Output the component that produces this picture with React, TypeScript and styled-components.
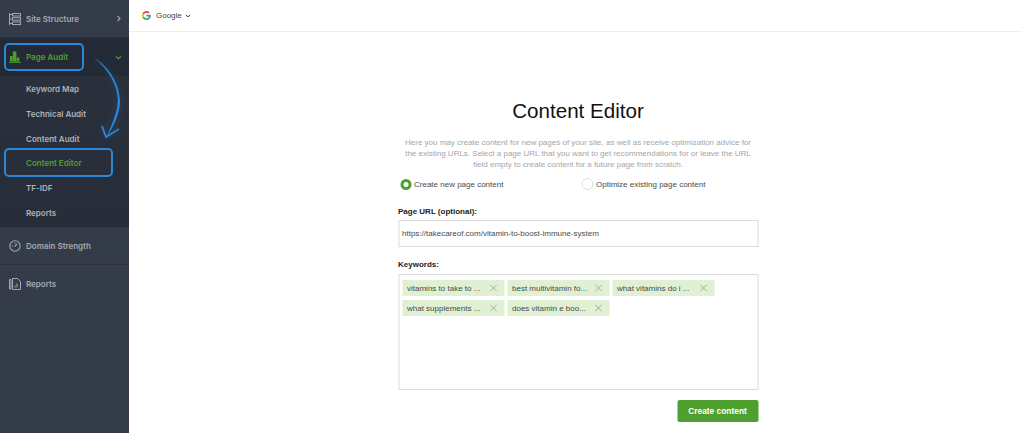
import React from "react";
import styled, { createGlobalStyle } from "styled-components";

const Global = createGlobalStyle`
  html, body { margin: 0; padding: 0; height: 100%; background: #fff; }
  body { font-family: "Liberation Sans", Arial, sans-serif; overflow: hidden; }
  #root { height: 100%; }
`;

const Page = styled.div`
  position: relative;
  display: flex;
  width: 1022px;
  height: 433px;
  overflow: hidden;
`;

const Sidebar = styled.aside`
  width: 129px;
  flex-shrink: 0;
  background: #353c49;
  font-family: Inter, "Liberation Sans", sans-serif;
`;

const NavRow = styled.div<{ $active?: boolean; $line?: boolean }>`
  display: flex;
  align-items: center;
  height: 38px;
  padding-left: 9px;
  background: ${(p) => (p.$active ? "#232a36" : "transparent")};
  border-bottom: ${(p) => (p.$line ? "1px solid #2c323e" : "none")};
  box-sizing: border-box;
  color: ${(p) => (p.$active ? "#4f9f2f" : "#a3a8b2")};
  font-size: 8px;
  font-weight: 600;
`;

const NavIcon = styled.svg`
  width: 12px;
  height: 12px;
  margin-right: 5px;
  flex-shrink: 0;
`;

const Caret = styled.svg`
  width: 7px;
  height: 7px;
  margin-left: auto;
  margin-right: 7px;
`;

const SubMenu = styled.div`
  display: flex;
  flex-direction: column;
  height: 151px;
  padding-top: 1px;
  box-sizing: border-box;
  background: linear-gradient(#2a303c, #272d38);
`;

const SubItem = styled.div<{ $active?: boolean }>`
  height: 24.8px;
  line-height: 24.8px;
  padding-left: 26px;
  font-size: 8px;
  font-weight: 600;
  color: ${(p) => (p.$active ? "#4f9f2f" : "#aeb2ba")};
`;

const Main = styled.main`
  flex: 1;
  min-width: 0;
  display: flex;
  flex-direction: column;
`;

const TopBar = styled.header`
  display: flex;
  align-items: center;
  flex-shrink: 0;
  height: 32px;
  padding-left: 13px;
  box-sizing: border-box;
  border-bottom: 1px solid #eeeeee;
  font-size: 8px;
  color: #444;
`;

const GoogleMark = styled.svg`
  width: 9px;
  height: 9px;
  margin-right: 5px;
`;

const TopCaret = styled.svg`
  width: 6px;
  height: 6px;
  margin-left: 3px;
`;

const Content = styled.div`
  width: 360px;
  margin: 0 auto;
  transform: translateX(2.5px);
  display: flex;
  flex-direction: column;
`;

const Title = styled.h1`
  margin: 66px 0 0;
  font-size: 20.6px;
  line-height: 26px;
  font-weight: 400;
  color: #111;
  text-align: center;
`;

const Intro = styled.p`
  margin: 13px 0 0;
  font-size: 8px;
  line-height: 11px;
  color: #a5a5a5;
  text-align: center;
  white-space: nowrap;
`;

const RadioRow = styled.div`
  display: grid;
  grid-template-columns: 181px 1fr;
  margin-top: 7px;
  padding-left: 2px;
  font-size: 8px;
  color: #4a4a4a;
`;

const RadioOption = styled.label`
  display: flex;
  align-items: center;
  gap: 3px;
  height: 14px;
`;

const RadioDot = styled.span<{ $on?: boolean }>`
  width: ${(p) => (p.$on ? "5px" : "10px")};
  height: ${(p) => (p.$on ? "5px" : "10px")};
  border-radius: 50%;
  background: #fff;
  border: ${(p) => (p.$on ? "3.5px solid #4f9f2f" : "1px solid #ddd")};
  flex-shrink: 0;
`;

const FieldLabel = styled.div<{ $top: number }>`
  margin-top: ${(p) => p.$top}px;
  font-size: 8px;
  line-height: 12px;
  font-weight: 700;
  color: #222;
`;

const UrlField = styled.div`
  margin-top: 2px;
  height: 27px;
  box-sizing: border-box;
  border: 1px solid #dcdcdc;
  padding-left: 3px;
  display: flex;
  align-items: center;
  font-size: 8px;
  color: #4a4a4a;
`;

const KeywordBox = styled.div`
  margin-top: 3px;
  height: 116px;
  box-sizing: border-box;
  border: 1px solid #dcdcdc;
  padding: 5px 3px;
  display: flex;
  flex-wrap: wrap;
  align-content: flex-start;
  gap: 4px 3px;
`;

const Tag = styled.div`
  width: 102px;
  height: 16px;
  box-sizing: border-box;
  background: #dff0d3;
  padding: 0 7px 0 5px;
  display: flex;
  align-items: center;
  justify-content: space-between;
  font-size: 8px;
  color: #4a4a4a;
  white-space: nowrap;
`;

const TagClose = styled.svg`
  width: 8px;
  height: 8px;
`;

const Actions = styled.div`
  display: flex;
  justify-content: flex-end;
  margin-top: 10px;
`;

const CreateButton = styled.button`
  width: 81px;
  height: 22px;
  border: none;
  border-radius: 2px;
  background: #4f9f2f;
  color: #fff;
  font-family: inherit;
  font-size: 8.4px;
  font-weight: 700;
  padding: 0;
`;

const Callout = styled.div<{ $x: number; $y: number; $w: number; $h: number }>`
  position: absolute;
  left: ${(p) => p.$x}px;
  top: ${(p) => p.$y}px;
  width: ${(p) => p.$w}px;
  height: ${(p) => p.$h}px;
  box-sizing: border-box;
  border: 2px solid #2b88d8;
  border-radius: 5px;
`;

const ArrowArt = styled.svg`
  position: absolute;
  left: 90px;
  top: 52px;
  width: 40px;
  height: 96px;
  overflow: visible;
  filter: drop-shadow(0 0 3px rgba(43, 136, 216, 0.35));
`;

const keywords = [
  "vitamins to take to ...",
  "best multivitamin fo...",
  "what vitamins do i ...",
  "what supplements ...",
  "does vitamin e boo...",
];

const iconStroke = "#a3a8b2";

export default function App() {
  return (
    <Page>
      <Global />
      <Sidebar>
        <NavRow $line>
          <NavIcon viewBox="0 0 12 12" fill="none" stroke={iconStroke} strokeWidth="1">
            <path d="M.5 0v12M.5 1.500h2.500M.5 6h2.500M.5 10.500h2.500" />
            <rect x="3.500" y=".5" width="8" height="2.500" />
            <rect x="3.500" y="4.700" width="8" height="2.500" />
            <rect x="3.500" y="9" width="8" height="2.500" />
          </NavIcon>
          Site Structure
          <Caret viewBox="0 0 7 7" fill="none" stroke={iconStroke} strokeWidth="1.1">
            <path d="M2.500 1l2.500 2.500-2.500 2.500" />
          </Caret>
        </NavRow>
        <NavRow $active>
          <NavIcon viewBox="0 0 12 12" fill="#4f9f2f">
            <rect x="1" y="5" width="2.500" height="5.500" />
            <rect x="3.800" y="0.500" width="3.600" height="10" />
            <rect x="7.700" y="6.500" width="2.500" height="4" />
            <rect x="0" y="10.800" width="12" height="1" />
          </NavIcon>
          Page Audit
          <Caret viewBox="0 0 7 7" fill="none" stroke="#4f9f2f" strokeWidth="1.2">
            <path d="M1 2.500l2.500 2.200 2.500-2.200" />
          </Caret>
        </NavRow>
        <SubMenu>
          <SubItem>Keyword Map</SubItem>
          <SubItem>Technical Audit</SubItem>
          <SubItem>Content Audit</SubItem>
          <SubItem $active>Content Editor</SubItem>
          <SubItem>TF-IDF</SubItem>
          <SubItem>Reports</SubItem>
        </SubMenu>
        <NavRow $line>
          <NavIcon viewBox="0 0 12 12" fill="none" stroke={iconStroke} strokeWidth="1.1">
            <circle cx="6" cy="6" r="5.200" />
            <path d="M5.600 6.600l2.600-2.800M2.800 6h1.200M6 2.800v1" />
          </NavIcon>
          Domain Strength
        </NavRow>
        <NavRow>
          <NavIcon viewBox="0 0 12 12" fill="none" stroke={iconStroke} strokeWidth="1">
            <path d="M.5 1.500h1.500v9.500H.5zM3.500.5h5l3 3v8h-8z" />
            <path d="M6 9.500V7.500M8 9.500V5.500" />
          </NavIcon>
          Reports
        </NavRow>
      </Sidebar>

      <Main>
        <TopBar>
          <GoogleMark viewBox="0 0 48 48">
            <path fill="#EA4335" d="M24 9.500c3.500 0 6.700 1.200 9.200 3.600l6.900-6.900C35.900 2.400 30.400 0 24 0 14.600 0 6.500 5.400 2.600 13.200l8 6.200C12.500 13.600 17.800 9.500 24 9.500z" />
            <path fill="#4285F4" d="M46.900 24.500c0-1.600-.1-3.100-.4-4.500H24v9h12.900c-.6 3-2.200 5.500-4.700 7.200l7.700 6c4.500-4.200 7-10.300 7-17.700z" />
            <path fill="#FBBC05" d="M10.500 28.600c-.5-1.400-.8-3-.8-4.600s.3-3.200.8-4.600l-8-6.200C.9 16.500 0 20.100 0 24s.9 7.500 2.600 10.800l7.900-6.200z" />
            <path fill="#34A853" d="M24 48c6.500 0 11.900-2.100 15.900-5.800l-7.700-6c-2.200 1.500-4.900 2.300-8.200 2.300-6.200 0-11.500-4.200-13.400-9.800l-8 6.200C6.500 42.600 14.600 48 24 48z" />
          </GoogleMark>
          Google
          <TopCaret viewBox="0 0 6 6" fill="none" stroke="#444" strokeWidth="1">
            <path d="M.8 2l2.200 1.800L5.200 2" />
          </TopCaret>
        </TopBar>
        <Content>
          <Title>Content Editor</Title>
          <Intro>
            Here you may create content for new pages of your site, as well as receive optimization advice for
            <br />
            the existing URLs. Select a page URL that you want to get recommendations for or leave the URL
            <br />
            field empty to create content for a future page from scratch.
          </Intro>
          <RadioRow>
            <RadioOption>
              <RadioDot $on />
              Create new page content
            </RadioOption>
            <RadioOption>
              <RadioDot />
              Optimize existing page content
            </RadioOption>
          </RadioRow>
          <FieldLabel $top={15}>Page URL (optional):</FieldLabel>
          <UrlField>https://takecareof.com/vitamin-to-boost-immune-system</UrlField>
          <FieldLabel $top={12}>Keywords:</FieldLabel>
          <KeywordBox>
            {keywords.map((k) => (
              <Tag key={k}>
                {k}
                <TagClose viewBox="0 0 8 8" fill="none" stroke="#9aa896" strokeWidth="0.9">
                  <path d="M.8.8l6.400 6.400M7.200.8L.8 7.200" />
                </TagClose>
              </Tag>
            ))}
          </KeywordBox>
          <Actions>
            <CreateButton>Create content</CreateButton>
          </Actions>
        </Content>
      </Main>

      <Callout $x={4} $y={43} $w={80} $h={28} />
      <Callout $x={4} $y={148} $w={109} $h={29} />
      <ArrowArt viewBox="0 0 40 96">
        <path d="M3 5C21 16 30 34 30 50C29.500 62 24 74 17 84C22 72 27.800 60 27.800 48C27.800 34 19 17 3 5Z" fill="#2b88d8" />
        <path d="M12 74L16 85L29 77" fill="none" stroke="#2b88d8" strokeWidth="1.800" />
      </ArrowArt>
    </Page>
  );
}
